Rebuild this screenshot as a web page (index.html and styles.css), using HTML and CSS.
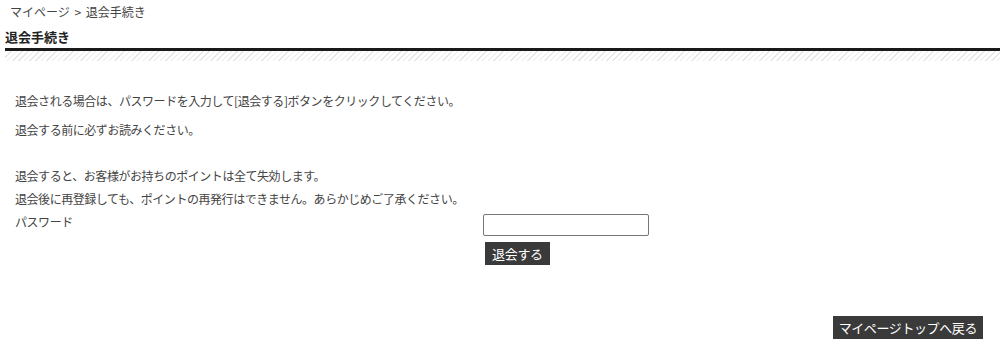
FILE: index.html
```html
<!DOCTYPE html>
<html lang="ja">
<head>
<meta charset="utf-8">
<link rel="stylesheet" href="styles.css">
</head>
<body>
<div class="breadcrumb">マイページ &gt; 退会手続き</div>
<div class="title-wrap">
  <h2 class="title">退会手続き</h2>
  <div class="stripes"></div>
</div>
<div class="content">
  <p class="p1">退会される場合は、パスワードを入力して[退会する]ボタンをクリックしてください。</p>
  <p class="p2">退会する前に必ずお読みください。</p>
  <p class="p3">退会すると、お客様がお持ちのポイントは全て失効します。</p>
  <p class="p4">退会後に再登録しても、ポイントの再発行はできません。あらかじめご了承ください。</p>
  <div class="form">
    <div class="label">パスワード</div>
    <div class="field">
      <input class="pw" type="password">
      <button class="btn">退会する</button>
    </div>
  </div>
</div>
<div class="footer">
  <button class="btn btn-back">マイページトップへ戻る</button>
</div>
</body>
</html>
```
FILE: styles.css
```css
html, body {
  margin: 0;
  padding: 0;
  background: #fff;
}
body {
  font-family: "Noto Sans CJK JP", "Noto Sans", sans-serif;
  font-size: 12px;
  color: #444;
  width: 1000px;
  height: 355px;
  overflow: hidden;
}
.breadcrumb {
  padding: 4px 0 0 10px;
  height: 20px;
  line-height: 16px;
  font-size: 12px;
  color: #444;
  word-spacing: 2px;
}
.title-wrap {
  margin-left: 5px;
}
.title {
  margin: 0;
  font-size: 13px;
  font-weight: bold;
  color: #222;
  line-height: 18px;
  padding: 4px 0 2px 0;
  border-bottom: 3px solid #1a1a1a;
}
.stripes {
  height: 10px;
  background: repeating-linear-gradient(135deg, #e6e6e6 0 1px, #fff 1px 4px);
}
.content {
  padding: 28px 0 0 15px;
  color: #444;
  letter-spacing: -0.45px;
}
.content p {
  margin: 0;
  line-height: 23px;
}
.p1 { margin-bottom: 6px !important; }
.p2 { margin-bottom: 23px !important; }
.form {
  display: grid;
  grid-template-columns: 468px auto;
}
.label {
  line-height: 23px;
}
.field {
  display: flex;
  flex-direction: column;
  align-items: flex-start;
  margin-top: 4px;
}
.pw {
  box-sizing: border-box;
  width: 166px;
  height: 22px;
  border: 1px solid #767676;
  border-radius: 2px;
  margin: 0;
}
.btn {
  font-family: "Noto Sans CJK JP", sans-serif;
  background: #3a3a3a;
  color: #fff;
  border: none;
  border-radius: 0;
  font-size: 13px;
  height: 23px;
  line-height: 23px;
  padding: 0 7px;
  margin: 6px 0 0 2px;
  letter-spacing: -0.3px;
}
.footer {
  display: flex;
  justify-content: flex-end;
  padding-right: 17px;
  margin-top: 51px;
}
.btn-back {
  margin: 0;
  padding: 0 6px;
  letter-spacing: -0.4px;
}
```
